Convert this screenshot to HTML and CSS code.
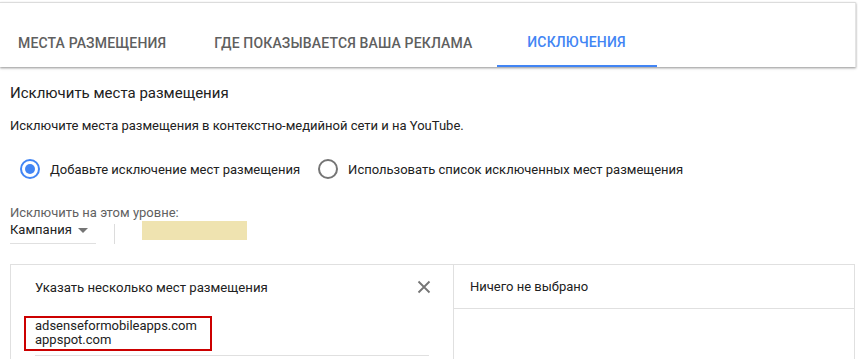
FILE: index.html
```html
<!DOCTYPE html>
<html lang="ru">
<head>
<meta charset="utf-8">
<link rel="stylesheet" href="styles.css">
</head>
<body>
<div class="tabbar">
  <div class="tabs">
    <div class="tab">Места размещения</div>
    <div class="tab">Где показывается ваша реклама</div>
    <div class="tab active">Исключения</div>
  </div>
</div>
<main class="content">
  <h2 class="title">Исключить места размещения</h2>
  <p class="subtitle">Исключите места размещения в контекстно-медийной сети и на YouTube.</p>
  <div class="radios">
    <label class="radio checked"><span class="circle"></span>Добавьте исключение мест размещения</label>
    <label class="radio"><span class="circle"></span>Использовать список исключенных мест размещения</label>
  </div>
  <div class="level">
    <div class="level-label">Исключить на этом уровне:</div>
    <div class="level-row">
      <div class="select">Кампания<span class="arrow"></span></div>
      <div class="sep"></div>
      <div class="chip"></div>
    </div>
  </div>
  <div class="panel">
    <div class="col left">
      <div class="head">
        <span>Указать несколько мест размещения</span>
        <svg class="close" width="14" height="14" viewBox="0 0 14 14"><path d="M1.5 1.5L12.5 12.5M12.5 1.5L1.5 12.5" stroke="#757575" stroke-width="1.8" fill="none"/></svg>
      </div>
      <div class="entry">
        <div class="lines">adsenseformobileapps.com<br>appspot.com</div>
        <div class="mark"></div>
      </div>
    </div>
    <div class="col right">
      <div class="head bordered">Ничего не выбрано</div>
    </div>
  </div>
</main>
</body>
</html>
```
FILE: styles.css
```css
html, body {
  margin: 0;
  padding: 0;
  background: #fff;
  font-family: Roboto, "Noto Sans", Arial, sans-serif;
  color: #212121;
  overflow: hidden;
}
body {
  padding-top: 2px;
}
.tabbar {
  border-top: 1px solid #dcdcdc;
  border-right: 1px solid #e4e4e4;
  width: 856px;
  height: 65px;
  box-sizing: border-box;
  padding-top: 16px;
  box-shadow: 0 1px 2px rgba(0,0,0,0.35), 0 2px 3px rgba(0,0,0,0.08);
  background: #fff;
  position: relative;
  z-index: 1;
}
.tabs {
  display: flex;
  margin-left: -6px;
}
.tab {
  height: 48px;
  line-height: 48px;
  padding: 0 24px;
  min-width: 160px;
  box-sizing: border-box;
  text-align: center;
  text-transform: uppercase;
  font-size: 14px;
  font-weight: 500;
  letter-spacing: 0.15px;
  color: #5f5f5f;
  border-bottom: 2px solid transparent;
}
.tab.active {
  color: #4285f4;
  border-bottom-color: #4285f4;
  line-height: 46px;
}
.content {
  padding: 0 0 0 10px;
}
.title {
  margin: 16px 0 0;
  font-size: 15px;
  font-weight: 400;
  line-height: 20px;
  color: #212121;
}
.subtitle {
  margin: 14px 0 0;
  font-size: 13px;
  line-height: 18px;
  color: #212121;
}
.radios {
  display: flex;
  gap: 18px;
  margin: 24px 0 0 10px;
}
.radio {
  display: flex;
  align-items: center;
  gap: 10px;
  height: 20px;
  font-size: 13px;
  color: #212121;
}
.circle {
  width: 20px;
  height: 20px;
  box-sizing: border-box;
  border: 2px solid #757575;
  border-radius: 50%;
  display: flex;
  align-items: center;
  justify-content: center;
}
.radio.checked .circle {
  border-color: #4285f4;
}
.radio.checked .circle::after {
  content: "";
  width: 10px;
  height: 10px;
  border-radius: 50%;
  background: #4285f4;
}
.level {
  margin-top: 26px;
}
.level-label {
  font-size: 13px;
  line-height: 16px;
  color: #616161;
}
.level-row {
  display: flex;
  align-items: flex-start;
  margin-top: -1px;
}
.select {
  width: 86px;
  height: 24px;
  box-sizing: border-box;
  border-bottom: 1px solid #e0e0e0;
  font-size: 13px;
  line-height: 20px;
  color: #212121;
  display: flex;
  align-items: flex-start;
}
.arrow {
  width: 0;
  height: 0;
  margin: 8px 0 0 6px;
  border-left: 5px solid transparent;
  border-right: 5px solid transparent;
  border-top: 5px solid #757575;
}
.sep {
  width: 1px;
  height: 20px;
  margin: 4px 0 0 18px;
  background: #dcdcdc;
}
.chip {
  width: 105px;
  height: 19px;
  margin: 1px 0 0 27px;
  background: #efe3b0;
}
.panel {
  display: flex;
  margin-top: 20px;
  width: 845px;
  height: 100px;
  border: 1px solid #e0e0e0;
  border-bottom: none;
  box-sizing: border-box;
}
.col.left {
  width: 443px;
  border-right: 1px solid #e0e0e0;
  padding: 0 24px 0 24px;
  box-sizing: border-box;
}
.col.right {
  flex: 1;
}
.head {
  height: 44px;
  display: flex;
  align-items: center;
  justify-content: space-between;
  font-size: 13.2px;
  color: #212121;
}
.head.bordered {
  border-bottom: 1px solid #e0e0e0;
  padding-left: 16px;
  box-sizing: border-box;
  font-size: 13px;
}
.close {
  margin-right: -2px;
}
.entry {
  position: relative;
  margin-top: 7px;
  border-bottom: 1px solid #e0e0e0;
  padding-bottom: 8px;
}
.lines {
  font-size: 13px;
  line-height: 14px;
  color: #212121;
  padding-top: 3px;
}
.mark {
  position: absolute;
  left: -11px;
  top: 0;
  width: 188px;
  height: 35px;
  box-sizing: border-box;
  border: 2px solid #cc0000;
}
```
